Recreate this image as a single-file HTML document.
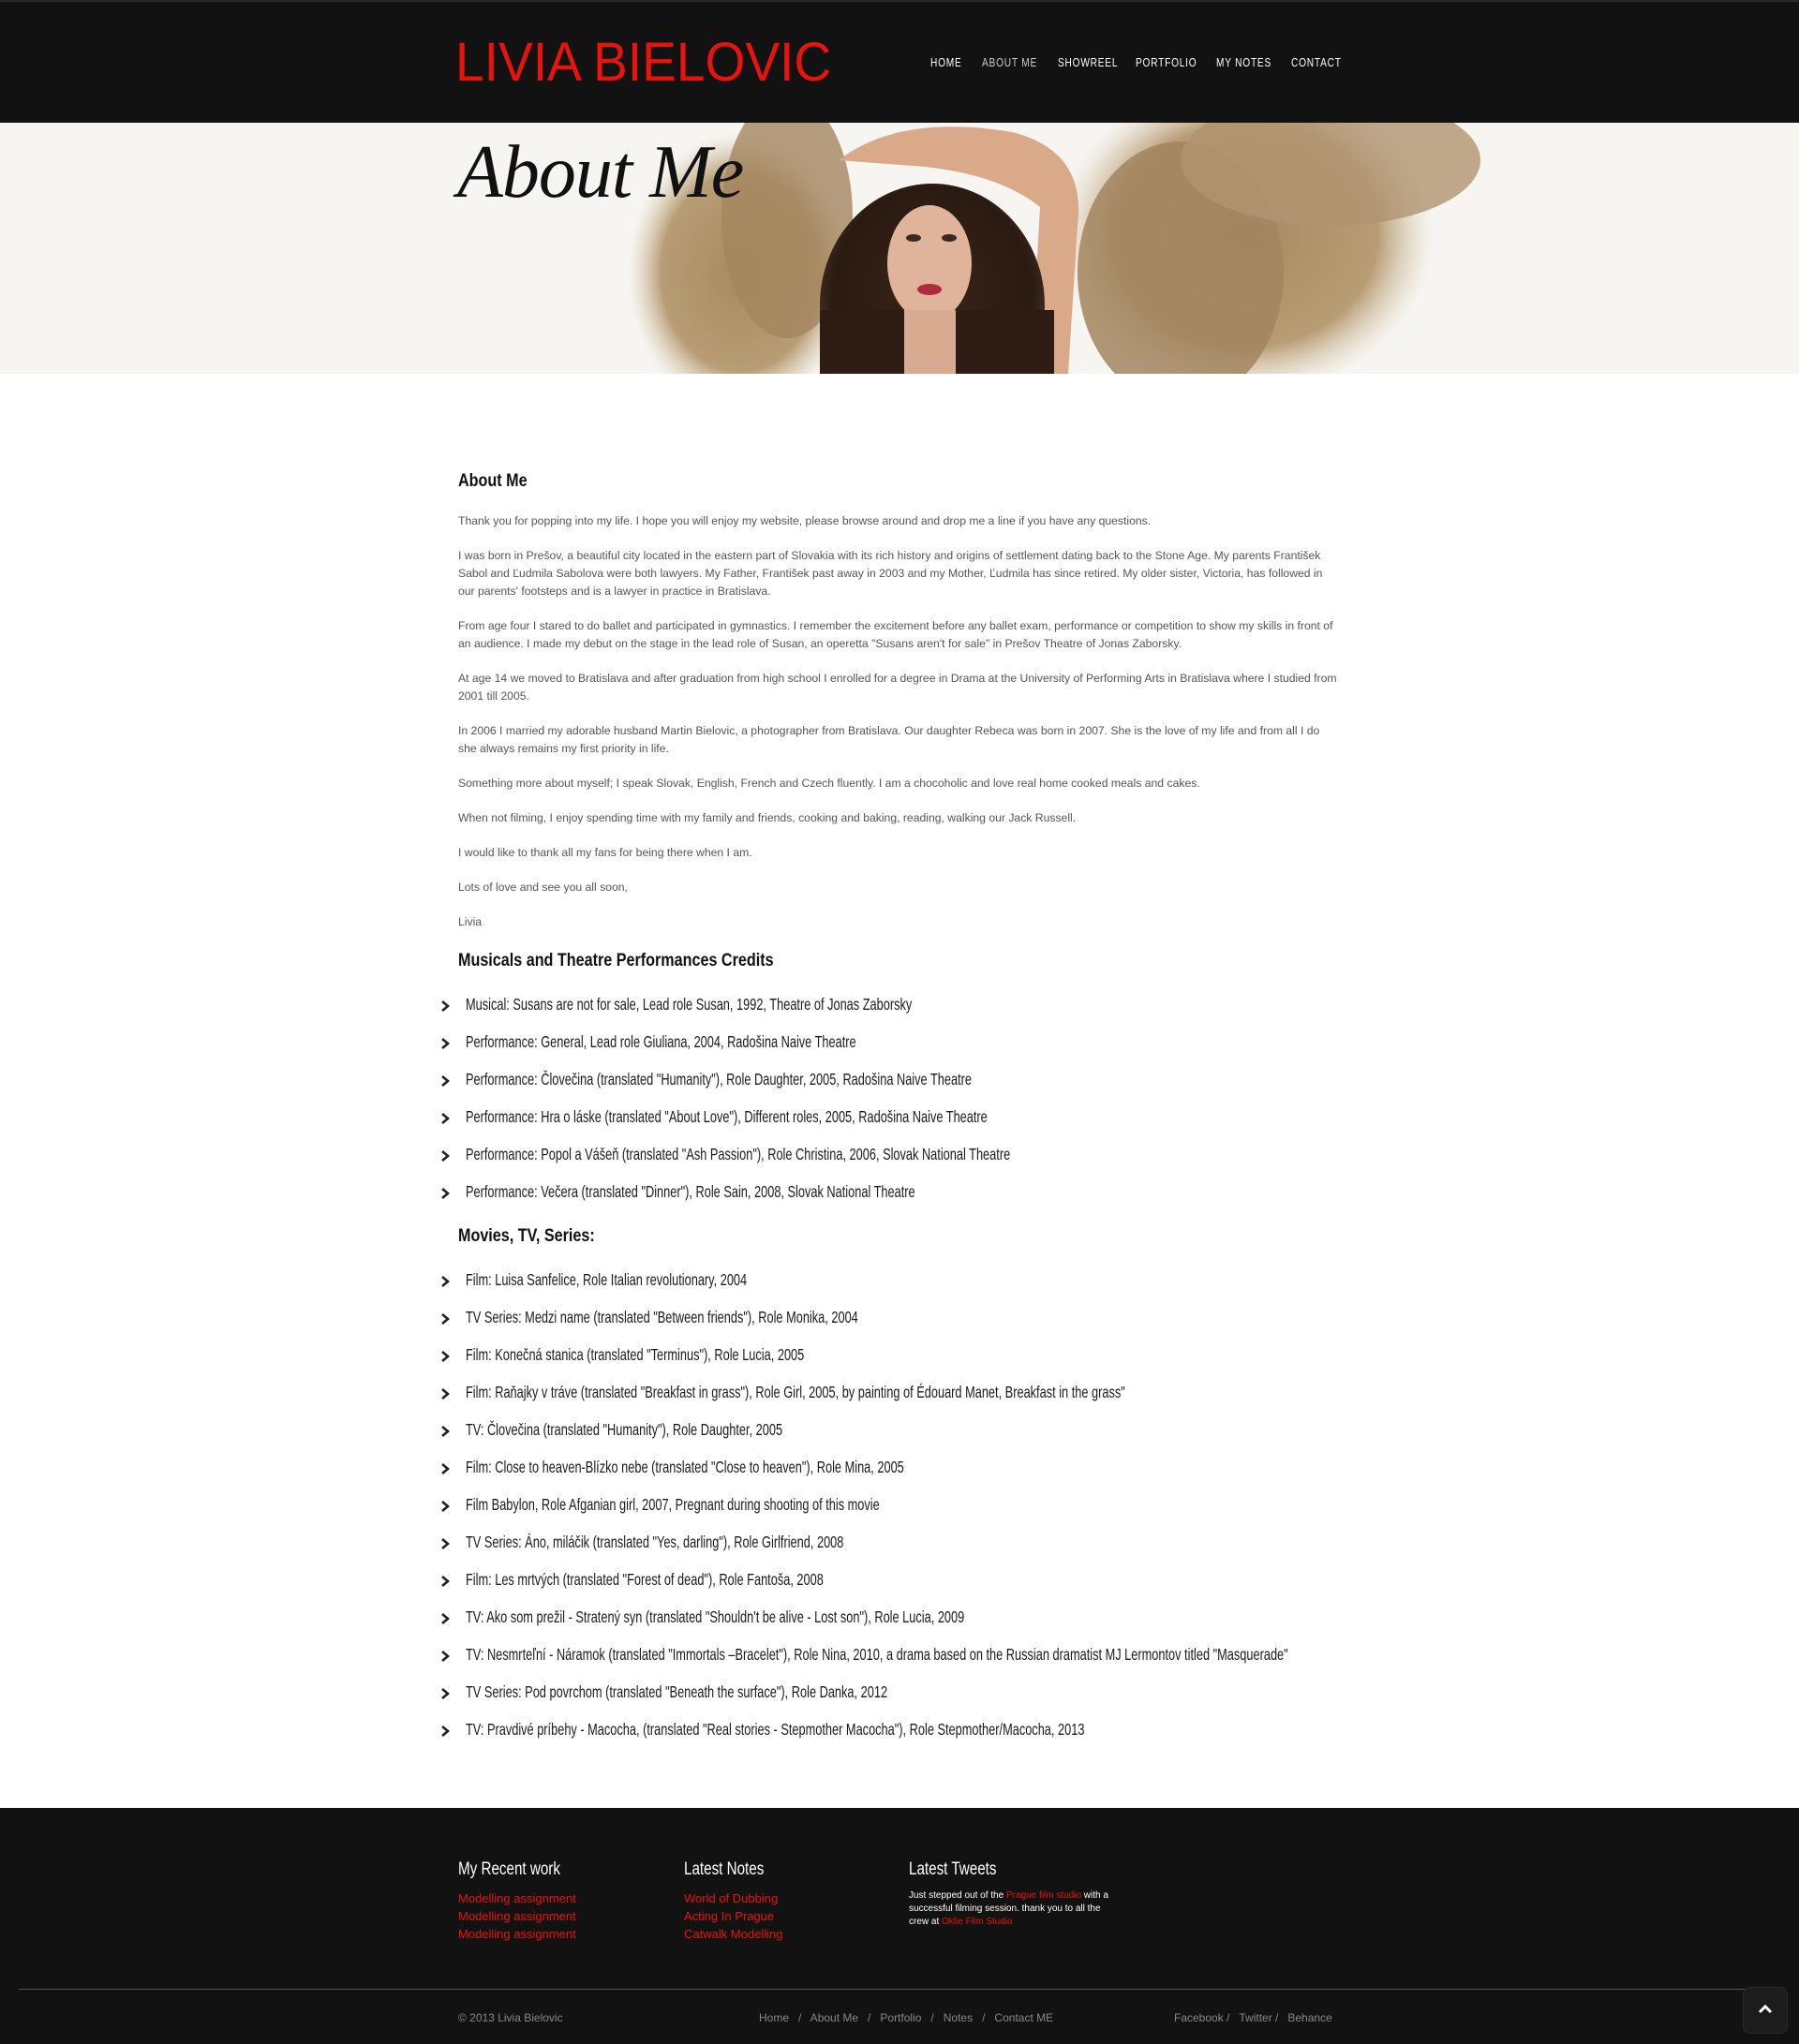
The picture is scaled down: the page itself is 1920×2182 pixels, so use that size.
<!DOCTYPE html>
<html><head><meta charset="utf-8">
<style>
*{margin:0;padding:0;box-sizing:border-box}
body{width:1920px;height:2182px;background:#fff;font-family:"Liberation Sans",sans-serif;position:relative;overflow:hidden}
.hdr{position:absolute;left:0;top:0;width:1920px;height:131px;background:#121212;border-top:2px solid #2a2a2a}
.logo{position:absolute;left:486px;top:31px;font-size:58px;color:#e8130c;letter-spacing:0px;transform:scaleX(0.95);transform-origin:left;white-space:nowrap;font-weight:normal}
.nav{position:absolute;top:57px;font-size:13px;color:#fff;letter-spacing:1px;white-space:nowrap;transform:scaleX(0.78);transform-origin:left}
.hero{position:absolute;left:0;top:131px;width:1920px;height:268px;background:#f7f5f1;overflow:hidden}
.ht{position:absolute;left:488px;font-family:"Liberation Serif",serif;font-style:italic;font-size:80px;color:#111;letter-spacing:-1px}
h2{position:absolute;left:489px;font-weight:bold;color:#111;font-size:19px;transform:scaleX(0.85);transform-origin:left;white-space:nowrap}
.p{position:absolute;left:489px;width:942px;color:#555;font-size:12.2px;line-height:19px}
.li{position:absolute;left:470px;white-space:nowrap;color:#222}
.li svg{position:absolute;left:0;top:6px}
.li span{position:absolute;left:27px;top:0;font-size:17.5px;display:inline-block;transform:scaleX(0.73);transform-origin:left;color:#1a1a1a}
.ft{position:absolute;left:0;top:1930px;width:1920px;height:252px;background:#121212}
.fh{position:absolute;top:1983px;color:#fff;font-size:19px;transform:scaleX(0.8);transform-origin:left;white-space:nowrap}
.fl{position:absolute;color:#e8130c;font-size:13px;line-height:19px;white-space:nowrap}
.bt{position:absolute;top:2145px;color:#888;font-size:12px;white-space:nowrap}
</style></head><body>
<div class="hdr">
<div class="logo">LIVIA BIELOVIC</div>
<div class="nav" style="left:993px">HOME</div>
<div class="nav" style="left:1048px;color:#ccc">ABOUT ME</div>
<div class="nav" style="left:1129px">SHOWREEL</div>
<div class="nav" style="left:1212px">PORTFOLIO</div>
<div class="nav" style="left:1298px">MY NOTES</div>
<div class="nav" style="left:1378px">CONTACT</div>
</div>
<div class="hero">
<svg width="1920" height="268" style="position:absolute;left:0;top:0">
<defs>
<radialGradient id="g1" cx="50%" cy="50%" r="50%"><stop offset="0" stop-color="#a88a62"/><stop offset="0.7" stop-color="#b89c74"/><stop offset="1" stop-color="#d8c8ae" stop-opacity="0"/></radialGradient>
<radialGradient id="hair" cx="50%" cy="45%" r="55%"><stop offset="0" stop-color="#3a2418"/><stop offset="0.8" stop-color="#2a1a12"/><stop offset="1" stop-color="#4a3326"/></radialGradient>
</defs>
<ellipse cx="790" cy="160" rx="120" ry="150" fill="url(#g1)"/>
<ellipse cx="840" cy="100" rx="70" ry="130" fill="#a4865f" opacity="0.8"/>
<ellipse cx="1330" cy="120" rx="200" ry="170" fill="url(#g1)"/>
<ellipse cx="1260" cy="160" rx="110" ry="140" fill="#a2855f" opacity="0.85"/>
<ellipse cx="1420" cy="40" rx="160" ry="70" fill="#b09470" opacity="0.8"/>
<path d="M895 40 Q960 -10 1080 10 Q1160 30 1150 110 L1140 268 L1100 268 L1110 90 Q1060 50 960 45 Z" fill="#d9a98a"/>
<ellipse cx="995" cy="195" rx="120" ry="130" fill="url(#hair)"/>
<rect x="875" y="200" width="250" height="68" fill="#2e1c14"/>
<ellipse cx="992" cy="150" rx="45" ry="62" fill="#e0b49a"/>
<rect x="965" y="200" width="55" height="68" fill="#d8aa90"/>
<ellipse cx="975" cy="123" rx="8" ry="4" fill="#3a2a24"/>
<ellipse cx="1013" cy="123" rx="8" ry="4" fill="#3a2a24"/>
<ellipse cx="992" cy="178" rx="13" ry="6" fill="#b2283f"/>
</svg>
<div class="ht" style="top:8px">About Me</div>
</div>

<h2 style="top:503px">About Me</h2>
<div class="p" style="top:547px">Thank you for popping into my life. I hope you will enjoy my website, please browse around and drop me a line if you have any questions.</div>
<div class="p" style="top:584px">I was born in Prešov, a beautiful city located in the eastern part of Slovakia with its rich history and origins of settlement dating back to the Stone Age. My parents František Sabol and Ľudmila Sabolova were both lawyers. My Father, František past away in 2003 and my Mother, Ľudmila has since retired. My older sister, Victoria, has followed in our parents' footsteps and is a lawyer in practice in Bratislava.</div>
<div class="p" style="top:659px">From age four I stared to do ballet and participated in gymnastics. I remember the excitement before any ballet exam, performance or competition to show my skills in front of an audience. I made my debut on the stage in the lead role of Susan, an operetta "Susans aren't for sale" in Prešov Theatre of Jonas Zaborsky.</div>
<div class="p" style="top:715px">At age 14 we moved to Bratislava and after graduation from high school I enrolled for a degree in Drama at the University of Performing Arts in Bratislava where I studied from 2001 till 2005.</div>
<div class="p" style="top:771px">In 2006 I married my adorable husband Martin Bielovic, a photographer from Bratislava. Our daughter Rebeca was born in 2007. She is the love of my life and from all I do she always remains my first priority in life.</div>
<div class="p" style="top:827px">Something more about myself; I speak Slovak, English, French and Czech fluently. I am a chocoholic and love real home cooked meals and cakes.</div>
<div class="p" style="top:864px">When not filming, I enjoy spending time with my family and friends, cooking and baking, reading, walking our Jack Russell.</div>
<div class="p" style="top:901px">I would like to thank all my fans for being there when I am.</div>
<div class="p" style="top:938px">Lots of love and see you all soon,</div>
<div class="p" style="top:975px">Livia</div>

<h2 style="top:1015px">Musicals and Theatre Performances Credits</h2>
<div class="li" style="top:1062px"><svg width="10" height="12"><path d="M2 1 L8 6 L2 11" stroke="#222" stroke-width="2.6" fill="none"/></svg><span>Musical: Susans are not for sale, Lead role Susan, 1992, Theatre of Jonas Zaborsky</span></div>
<div class="li" style="top:1102px"><svg width="10" height="12"><path d="M2 1 L8 6 L2 11" stroke="#222" stroke-width="2.6" fill="none"/></svg><span>Performance: General, Lead role Giuliana, 2004, Radošina Naive Theatre</span></div>
<div class="li" style="top:1142px"><svg width="10" height="12"><path d="M2 1 L8 6 L2 11" stroke="#222" stroke-width="2.6" fill="none"/></svg><span>Performance: Človečina (translated "Humanity"), Role Daughter, 2005, Radošina Naive Theatre</span></div>
<div class="li" style="top:1182px"><svg width="10" height="12"><path d="M2 1 L8 6 L2 11" stroke="#222" stroke-width="2.6" fill="none"/></svg><span>Performance: Hra o láske (translated "About Love"), Different roles, 2005, Radošina Naive Theatre</span></div>
<div class="li" style="top:1222px"><svg width="10" height="12"><path d="M2 1 L8 6 L2 11" stroke="#222" stroke-width="2.6" fill="none"/></svg><span>Performance: Popol a Vášeň (translated "Ash Passion"), Role Christina, 2006, Slovak National Theatre</span></div>
<div class="li" style="top:1262px"><svg width="10" height="12"><path d="M2 1 L8 6 L2 11" stroke="#222" stroke-width="2.6" fill="none"/></svg><span>Performance: Večera (translated "Dinner"), Role Sain, 2008, Slovak National Theatre</span></div>

<h2 style="top:1309px">Movies, TV, Series:</h2>
<div class="li" style="top:1356px"><svg width="10" height="12"><path d="M2 1 L8 6 L2 11" stroke="#222" stroke-width="2.6" fill="none"/></svg><span>Film: Luisa Sanfelice, Role Italian revolutionary, 2004</span></div>
<div class="li" style="top:1396px"><svg width="10" height="12"><path d="M2 1 L8 6 L2 11" stroke="#222" stroke-width="2.6" fill="none"/></svg><span>TV Series: Medzi name (translated "Between friends"), Role Monika, 2004</span></div>
<div class="li" style="top:1436px"><svg width="10" height="12"><path d="M2 1 L8 6 L2 11" stroke="#222" stroke-width="2.6" fill="none"/></svg><span>Film: Konečná stanica (translated "Terminus"), Role Lucia, 2005</span></div>
<div class="li" style="top:1476px"><svg width="10" height="12"><path d="M2 1 L8 6 L2 11" stroke="#222" stroke-width="2.6" fill="none"/></svg><span>Film: Raňajky v tráve (translated "Breakfast in grass"), Role Girl, 2005, by painting of Édouard Manet, Breakfast in the grass"</span></div>
<div class="li" style="top:1516px"><svg width="10" height="12"><path d="M2 1 L8 6 L2 11" stroke="#222" stroke-width="2.6" fill="none"/></svg><span>TV: Človečina (translated "Humanity"), Role Daughter, 2005</span></div>
<div class="li" style="top:1556px"><svg width="10" height="12"><path d="M2 1 L8 6 L2 11" stroke="#222" stroke-width="2.6" fill="none"/></svg><span>Film: Close to heaven-Blízko nebe (translated "Close to heaven"), Role Mina, 2005</span></div>
<div class="li" style="top:1596px"><svg width="10" height="12"><path d="M2 1 L8 6 L2 11" stroke="#222" stroke-width="2.6" fill="none"/></svg><span>Film Babylon, Role Afganian girl, 2007, Pregnant during shooting of this movie</span></div>
<div class="li" style="top:1636px"><svg width="10" height="12"><path d="M2 1 L8 6 L2 11" stroke="#222" stroke-width="2.6" fill="none"/></svg><span>TV Series: Áno, miláčik (translated "Yes, darling"), Role Girlfriend, 2008</span></div>
<div class="li" style="top:1676px"><svg width="10" height="12"><path d="M2 1 L8 6 L2 11" stroke="#222" stroke-width="2.6" fill="none"/></svg><span>Film: Les mrtvých (translated "Forest of dead"), Role Fantoša, 2008</span></div>
<div class="li" style="top:1716px"><svg width="10" height="12"><path d="M2 1 L8 6 L2 11" stroke="#222" stroke-width="2.6" fill="none"/></svg><span>TV: Ako som prežil - Stratený syn (translated "Shouldn't be alive - Lost son"), Role Lucia, 2009</span></div>
<div class="li" style="top:1756px"><svg width="10" height="12"><path d="M2 1 L8 6 L2 11" stroke="#222" stroke-width="2.6" fill="none"/></svg><span>TV: Nesmrteľní - Náramok (translated "Immortals –Bracelet"), Role Nina, 2010, a drama based on the Russian dramatist MJ Lermontov titled "Masquerade"</span></div>
<div class="li" style="top:1796px"><svg width="10" height="12"><path d="M2 1 L8 6 L2 11" stroke="#222" stroke-width="2.6" fill="none"/></svg><span>TV Series: Pod povrchom (translated "Beneath the surface"), Role Danka, 2012</span></div>
<div class="li" style="top:1836px"><svg width="10" height="12"><path d="M2 1 L8 6 L2 11" stroke="#222" stroke-width="2.6" fill="none"/></svg><span>TV: Pravdivé príbehy - Macocha, (translated "Real stories - Stepmother Macocha"), Role Stepmother/Macocha, 2013</span></div>

<div class="ft"></div>
<div class="fh" style="left:489px;top:1985px">My Recent work</div>
<div class="fh" style="left:730px;top:1985px">Latest Notes</div>
<div class="fh" style="left:970px;top:1985px">Latest Tweets</div>
<div class="fl" style="left:489px;top:2017px">Modelling assignment<br>Modelling assignment<br>Modelling assignment</div>
<div class="fl" style="left:730px;top:2017px">World of Dubbing<br>Acting In Prague<br>Catwalk Modelling</div>
<div style="position:absolute;left:970px;top:2017px;width:225px;color:#fff;font-size:10px;line-height:14px">Just stepped out of the <span style="color:#e8130c">Prague film studio</span> with a successful filming session. thank you to all the crew at <span style="color:#e8130c">Oklie Film Studio</span></div>
<div style="position:absolute;left:20px;top:2123px;width:1880px;height:1px;background:#555"></div>
<div class="bt" style="left:489px;top:2147px">© 2013 Livia Bielovic</div>
<div class="bt" style="left:810px;font-size:12px;top:2147px">Home &nbsp; / &nbsp; About Me &nbsp; / &nbsp; Portfolio &nbsp; / &nbsp; Notes &nbsp; / &nbsp; Contact ME</div>
<div class="bt" style="left:1253px;font-size:12px;top:2147px">Facebook / &nbsp;&nbsp;Twitter / &nbsp;&nbsp;Behance</div>
<div style="position:absolute;left:1860px;top:2121px;width:48px;height:50px;background:#1c1c1c;border-radius:8px;border:1px solid #2a2a2a"></div>
<svg style="position:absolute;left:1876px;top:2139px" width="16" height="12"><path d="M2 9 L8 3 L14 9" stroke="#fff" stroke-width="3" fill="none"/></svg>
</body></html>
